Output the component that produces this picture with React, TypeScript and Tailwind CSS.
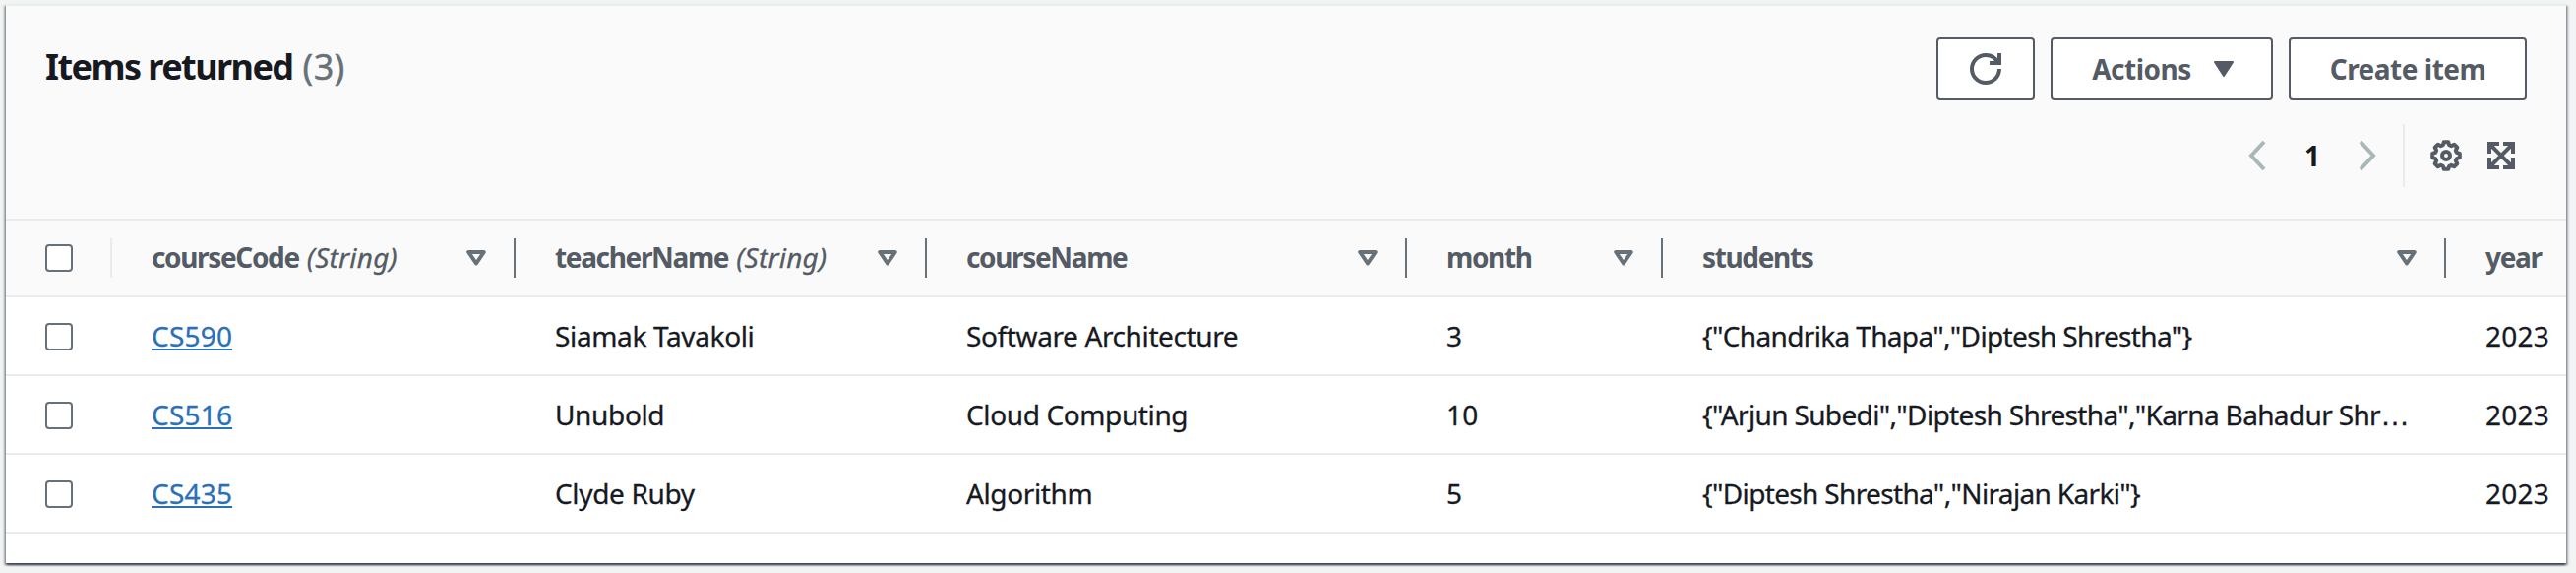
import React from "react";

type Column = { name: string; type?: string; width: string; tracking: string; filter: boolean };

const columns: Column[] = [
  { name: "courseCode", type: "(String)", width: "w-[410px]", tracking: "tracking-[0.2px]", filter: true },
  { name: "teacherName", type: "(String)", width: "w-[418px]", tracking: "tracking-[-0.35px]", filter: true },
  { name: "courseName", width: "w-[488px]", tracking: "tracking-[-0.38px]", filter: true },
  { name: "month", width: "w-[260px]", tracking: "tracking-[0.2px]", filter: true },
  { name: "students", width: "w-[796px]", tracking: "tracking-[-0.65px]", filter: true },
  { name: "year", width: "w-[200px]", tracking: "tracking-[0.2px]", filter: false },
];

const rows: string[][] = [
  ["CS590", "Siamak Tavakoli", "Software Architecture", "3", '{"Chandrika Thapa","Diptesh Shrestha"}', "2023"],
  ["CS516", "Unubold", "Cloud Computing", "10", '{"Arjun Subedi","Diptesh Shrestha","Karna Bahadur Shr…', "2023"],
  ["CS435", "Clyde Ruby", "Algorithm", "5", '{"Diptesh Shrestha","Nirajan Karki"}', "2023"],
];

function Checkbox() {
  return <span className="block size-7 shrink-0 rounded-[4px] border-2 border-[#687078] bg-white" />;
}

function FilterIcon() {
  return (
    <svg width="20" height="16" viewBox="0 0 20 16" fill="none" stroke="#687078" strokeWidth="4" strokeLinejoin="round">
      <path d="M2.2 2H17.8L10 13.5Z" />
    </svg>
  );
}

function RefreshIcon() {
  return (
    <svg width="32" height="32" viewBox="0 0 16 16" fill="none" stroke="#545b64" strokeWidth="2">
      <path d="M15 8a7 7 0 0 1-14 0 7 7 0 0 1 7-7 6.87 6.87 0 0 1 6.3 4" />
      <path d="M10 5h5V0" />
    </svg>
  );
}

function GearIcon() {
  return (
    <svg width="32" height="32" viewBox="-8 -8 16 16" fill="none" stroke="#545b64" strokeWidth="2" strokeLinejoin="round">
      <path d="M6.9 -1.1V1.1L5.37 1.59L4.92 2.67L5.66 4.11L4.11 5.66L2.67 4.92L1.59 5.37L1.1 6.9H-1.1L-1.59 5.37L-2.67 4.92L-4.11 5.66L-5.66 4.11L-4.92 2.67L-5.37 1.59L-6.9 1.1V-1.1L-5.37 -1.59L-4.92 -2.67L-5.66 -4.11L-4.11 -5.66L-2.67 -4.92L-1.59 -5.37L-1.1 -6.9H1.1L1.59 -5.37L2.67 -4.92L4.11 -5.66L5.66 -4.11L4.92 -2.67L5.37 -1.59Z" />
      <circle cx="0" cy="0" r="2" />
    </svg>
  );
}

function ExpandIcon() {
  return (
    <svg width="28" height="28" viewBox="0 0 28 28" fill="none" stroke="#545b64" strokeWidth="4">
      <path d="M2 12V2H12M16 2H26V12M26 16V26H16M12 26H2V16M2 2L26 26M26 2L2 26" />
    </svg>
  );
}

function CellText({ value }: { value: string }) {
  const clipped = value.endsWith("…");
  return (
    <span>
      {clipped ? value.slice(0, -1) : value}
      {clipped && <span className="font-['Liberation_Sans',sans-serif] text-[30px] leading-none">…</span>}
    </span>
  );
}

export default function App() {
  return (
    <div className="h-[582px] w-[2618px] overflow-hidden bg-[#f2f3f3] pl-1.5 pt-1 font-['Noto_Sans',sans-serif] text-[28px] leading-[44px] text-[#16191f]">
      <main className="h-[568px] w-[2602px] overflow-hidden border-t-2 border-[#eaeded] bg-white shadow-[0_2px_2px_0_rgba(16,24,40,0.6),2px_2px_2px_0_rgba(16,24,40,0.3),-2px_2px_2px_0_rgba(16,24,40,0.3)]">
        <header className="h-[218px] border-b-2 border-[#eaebeb] bg-[#fafafa] px-10">
          <div className="flex items-start justify-between pt-8">
            <h2 className="flex gap-2 pt-2 text-[36px] leading-[44px]">
              <span className="font-bold tracking-[-1.55px]">Items returned</span>
              <span className="ml-0.5 tracking-[0.3px] text-[#687078] [-webkit-text-stroke:0.4px]">(3)</span>
            </h2>
            <div className="flex gap-4 font-bold tracking-[-0.5px] text-[#545b64]">
              <button className="flex h-16 w-[100px] items-center justify-center rounded-[4px] border-2 border-[#545b64] bg-white">
                <RefreshIcon />
              </button>
              <button className="flex h-16 w-[226px] items-center justify-center gap-[23px] rounded-[4px] border-2 border-[#545b64] bg-white pl-0.5">
                Actions
                <svg width="20" height="16" viewBox="0 0 20 16" fill="#545b64" stroke="#545b64" strokeWidth="2" strokeLinejoin="round">
                  <path d="M1 1H19L10 15Z" />
                </svg>
              </button>
              <button className="flex h-16 w-[242px] items-center justify-center rounded-[4px] border-2 border-[#545b64] bg-white">
                Create item
              </button>
            </div>
          </div>
          <div className="mt-6 flex h-16 items-center justify-end pr-3">
            <svg width="20" height="32" viewBox="0 0 20 32" fill="none" stroke="#aab7b8" strokeWidth="4">
              <path d="M17 2L4 16L17 30" />
            </svg>
            <span className="w-[92px] text-center font-bold">1</span>
            <svg width="20" height="32" viewBox="0 0 20 32" fill="none" stroke="#aab7b8" strokeWidth="4">
              <path d="M3 2L16 16L3 30" />
            </svg>
            <span className="ml-[26px] mr-[26px] h-16 w-0.5 bg-[#eaebeb]" />
            <GearIcon />
            <span className="w-[26px]" />
            <ExpandIcon />
          </div>
        </header>
        <div className="flex h-[78px] w-max border-b-2 border-[#eaebeb] bg-[#fafafa] text-[#545b64]">
          <div className="flex w-[108px] items-center justify-between pl-10">
            <Checkbox />
            <span className="h-10 w-0.5 bg-[#eaebeb]" />
          </div>
          {columns.map((c) => (
            <div key={c.name} className={`${c.width} flex items-center pl-10`}>
              <span className="pb-0.5 font-bold tracking-[-1.35px]">{c.name}</span>
              {c.type && (
                <span className="ml-2 pb-0.5 italic tracking-[0.2px] [-webkit-text-stroke:0.3px]">{c.type}</span>
              )}
              {c.filter && (
                <>
                  <span className="ml-auto mr-[28px]">
                    <FilterIcon />
                  </span>
                  <span className="h-10 w-0.5 bg-[#687078]" />
                </>
              )}
            </div>
          ))}
        </div>
        {rows.map((r) => (
          <div key={r[0]} className="flex h-20 w-max items-center border-b-2 border-[#eaebeb]">
            <div className="w-[108px] pl-10 pt-0.5">
              <Checkbox />
            </div>
            {r.map((v, i) => (
              <div
                key={i}
                className={`${columns[i].width} ${columns[i].tracking} whitespace-nowrap pl-10 [-webkit-text-stroke:0.3px]`}
              >
                {i === 0 ? (
                  <a className="text-[#2970b8] underline decoration-2 underline-offset-2">{v}</a>
                ) : (
                  <CellText value={v} />
                )}
              </div>
            ))}
          </div>
        ))}
      </main>
    </div>
  );
}
